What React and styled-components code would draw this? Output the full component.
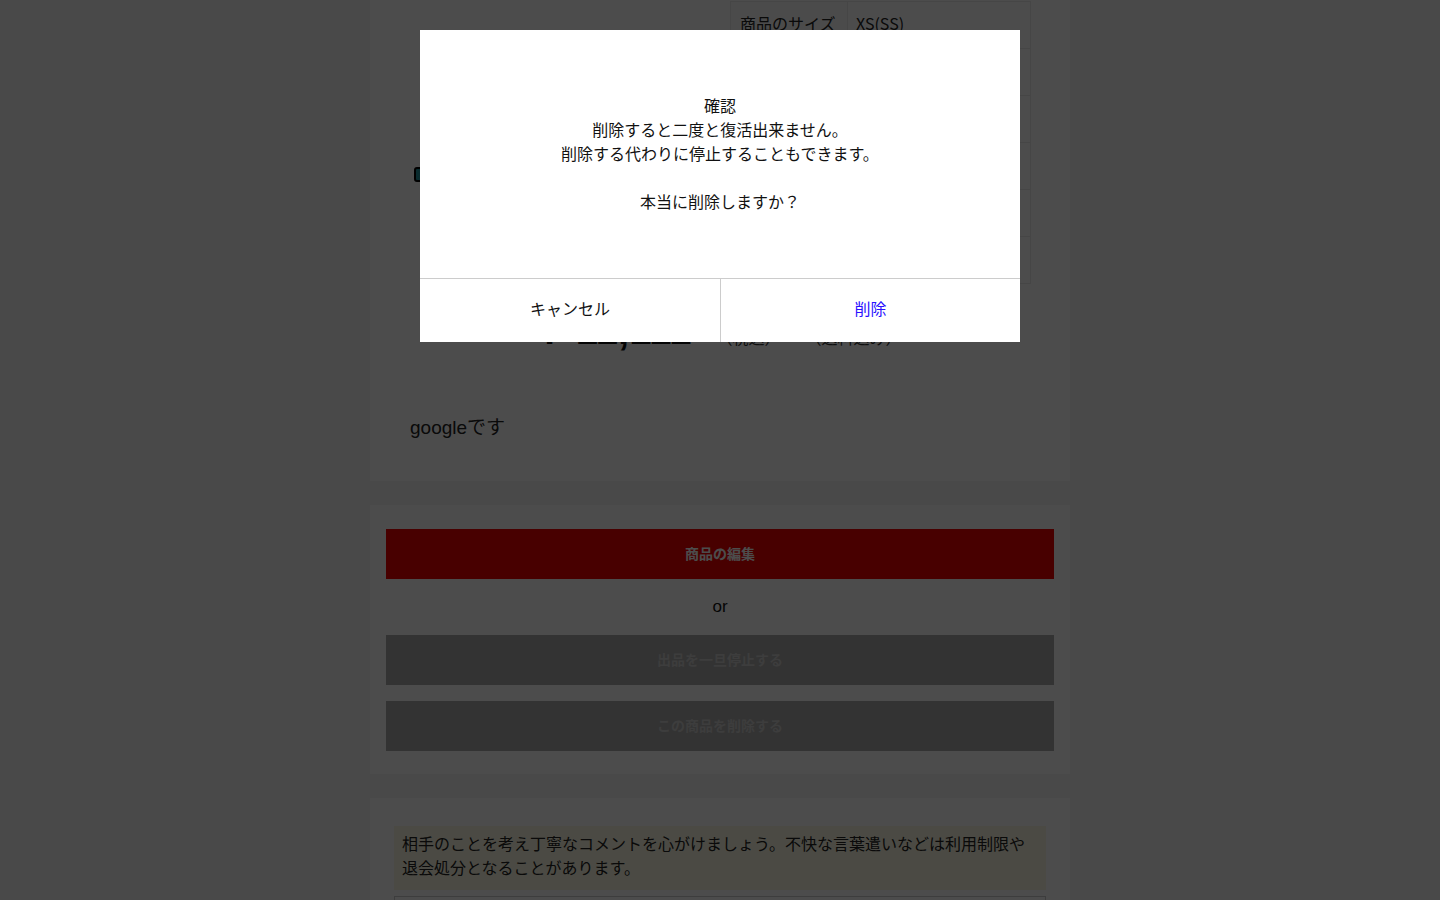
import React from "react";
import styled, { createGlobalStyle } from "styled-components";

const GlobalStyle = createGlobalStyle`
  html, body { margin: 0; padding: 0; }
  body {
    background: #f5f5f5;
    font-family: "Liberation Sans", "Noto Sans CJK JP", sans-serif;
    color: #222;
    overflow: hidden;
  }
  * { box-sizing: border-box; }
`;

const Page = styled.main`
  width: 700px;
  margin: 0 auto;
  display: flex;
  flex-direction: column;
  gap: 24px;
  min-height: 900px;
`;

const Panel = styled.section`
  background: #fff;
  padding: ${(p) => p.$pad};
`;

const TopGrid = styled.div`
  display: grid;
  grid-template-columns: 1fr 301px;
  column-gap: 16px;
  margin-right: -1px;
`;

const Gallery = styled.div`
  padding-top: 167px;
  padding-left: 4px;
`;

const ArrowButton = styled.div`
  width: 28px;
  height: 15px;
  border: 2px solid #000;
  border-radius: 3px;
  background: #1f8f9a;
`;

const SpecTable = styled.table`
  width: 100%;
  border-collapse: collapse;
  margin-top: 1px;
  font-family: "Noto Sans CJK JP", sans-serif;
  font-size: 16px;
  color: #222;
`;

const Row = styled.tr`
  height: 47px;
`;

const HeadCell = styled.th`
  width: 117px;
  text-align: left;
  font-weight: 400;
  padding: 0 9px 4px;
  border: 1px solid #ebebeb;
  background: #fafafa;
`;

const Cell = styled.td`
  padding: 0 8px 4px;
  border: 1px solid #ebebeb;
`;

const PriceRow = styled.div`
  margin-top: 24px;
  display: flex;
  justify-content: center;
  align-items: baseline;
  gap: 25px;
  height: 44px;
  color: #111;
`;

const Price = styled.span`
  font-family: "Liberation Sans", sans-serif;
  font-size: 40px;
  font-weight: 700;
  line-height: 44px;
  word-spacing: 4px;
`;

const PriceNote = styled.span`
  font-family: "Noto Sans CJK JP", sans-serif;
  font-size: 16px;
  color: #333;
`;

const Description = styled.p`
  margin: 63px 0 0;
  font-family: "Liberation Sans", "Noto Sans CJK JP", sans-serif;
  font-size: 19px;
  line-height: 26px;
  color: #222;
`;

const ActionButton = styled.button`
  display: flex;
  align-items: center;
  justify-content: center;
  width: 100%;
  height: 50px;
  border: none;
  background: ${(p) => (p.$variant === "red" ? "#f20000" : "#aaaaaa")};
  color: ${(p) => (p.$variant === "red" ? "#ffffff" : "#cccccc")};
  font-family: "Noto Sans CJK JP", sans-serif;
  font-size: 14px;
  font-weight: 700;
  padding: 0 0 2px;
  cursor: pointer;
`;

const Or = styled.div`
  height: 56px;
  display: flex;
  align-items: center;
  justify-content: center;
  font-family: "Liberation Sans", sans-serif;
  font-size: 17px;
  color: #111;
`;

const ButtonStack = styled.div`
  display: flex;
  flex-direction: column;
  gap: 16px;
`;

const Notice = styled.div`
  background: #fcf8e3;
  padding: 5px 8px 11px;
  font-family: "Noto Sans CJK JP", sans-serif;
  font-size: 16px;
  line-height: 24px;
  color: #222;
`;

const CommentBox = styled.textarea`
  display: block;
  width: 100%;
  height: 120px;
  margin-top: 6px;
  border: 1px solid #ccc;
  resize: none;
  background: #fff;
`;

const Overlay = styled.div`
  position: fixed;
  inset: 0;
  background: rgba(0, 0, 0, 0.7);
`;

const Modal = styled.div`
  position: fixed;
  top: 30px;
  left: 50%;
  transform: translateX(-50%);
  width: 600px;
  background: #fff;
  display: flex;
  flex-direction: column;
`;

const ModalBody = styled.div`
  height: 248px;
  padding-bottom: 2px;
  display: flex;
  align-items: center;
  justify-content: center;
  text-align: center;
  white-space: pre-line;
  font-family: "Noto Sans CJK JP", sans-serif;
  font-size: 16px;
  line-height: 24px;
  color: #111;
`;

const ModalFooter = styled.div`
  display: grid;
  grid-template-columns: 1fr 1fr;
  border-top: 1px solid #cccccc;
  height: 64px;
`;

const ModalButton = styled.button`
  border: none;
  background: #fff;
  border-left: ${(p) => (p.$divider ? "1px solid #cccccc" : "none")};
  color: ${(p) => (p.$danger ? "#2a10ff" : "#111")};
  font-family: "Noto Sans CJK JP", sans-serif;
  font-size: 16px;
  cursor: pointer;
  padding: 0 0 6px;
`;

const specs = [
  ["商品のサイズ", "XS(SS)"],
  ["", ""],
  ["", ""],
  ["", ""],
  ["", ""],
  ["", ""],
];

export default function App() {
  return (
    <>
      <GlobalStyle />
      <Page>
        <Panel $pad="0 40px 40px">
          <TopGrid>
            <Gallery>
              <ArrowButton />
            </Gallery>
            <SpecTable>
              <tbody>
                {specs.map(([k, v], i) => (
                  <Row key={i}>
                    <HeadCell>{k}</HeadCell>
                    <Cell>{v}</Cell>
                  </Row>
                ))}
              </tbody>
            </SpecTable>
          </TopGrid>
          <PriceRow>
            <Price>¥ 11,111</Price>
            <PriceNote>（税込）</PriceNote>
            <PriceNote>（送料込み）</PriceNote>
          </PriceRow>
          <Description>googleです</Description>
        </Panel>

        <Panel $pad="24px 16px 23px">
          <ActionButton $variant="red">商品の編集</ActionButton>
          <Or>or</Or>
          <ButtonStack>
            <ActionButton>出品を一旦停止する</ActionButton>
            <ActionButton>この商品を削除する</ActionButton>
          </ButtonStack>
        </Panel>

        <Panel $pad="28px 24px 24px">
          <Notice>
            相手のことを考え丁寧なコメントを心がけましょう。不快な言葉遣いなどは利用制限や退会処分となることがあります。
          </Notice>
          <CommentBox />
        </Panel>
      </Page>

      <Overlay />
      <Modal role="dialog">
        <ModalBody>
          {"確認\n削除すると二度と復活出来ません。\n削除する代わりに停止することもできます。\n\n本当に削除しますか？"}
        </ModalBody>
        <ModalFooter>
          <ModalButton>キャンセル</ModalButton>
          <ModalButton $divider $danger>
            削除
          </ModalButton>
        </ModalFooter>
      </Modal>
    </>
  );
}
